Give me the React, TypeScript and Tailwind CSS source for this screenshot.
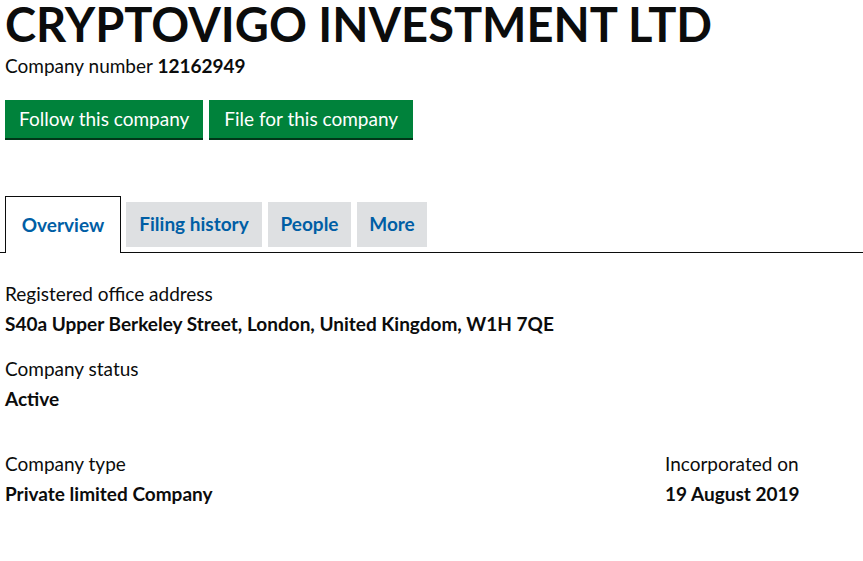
export default function App() {
  const font = { fontFamily: 'Lato, "Open Sans", sans-serif' };
  return (
    <main className="min-h-screen bg-white text-[#0b0c0c]" style={font}>
      <div className="px-[5px]">
        <h1 className="text-[47px] leading-[49px] font-bold">CRYPTOVIGO INVESTMENT LTD</h1>
        <p className="text-[19px] leading-[24px] mt-[5px]">
          Company number <strong className="font-bold">12162949</strong>
        </p>
        <div className="flex gap-[6px] mt-[22px]">
          <button className="bg-[#00823b] text-white text-[19px] h-[38px] px-[14px] shadow-[0_2px_0_#003618]">
            Follow this company
          </button>
          <button className="bg-[#00823b] text-white text-[19px] h-[38px] px-[15px] shadow-[0_2px_0_#003618]">
            File for this company
          </button>
        </div>
      </div>

      <div className="mt-[58px] flex items-end border-b border-[#0b0c0c] pl-[5px]">
        <div className="border border-b-0 border-[#0b0c0c] bg-white h-[57px] -mb-px w-[116px] flex items-center justify-center text-[19px] font-bold text-[#005ea5]">
          Overview
        </div>
        <div className="ml-[5px] mb-[5px] bg-[#dee0e2] h-[45px] w-[136px] flex items-center justify-center text-[19px] font-bold text-[#005ea5]">
          Filing history
        </div>
        <div className="ml-[6px] mb-[5px] bg-[#dee0e2] h-[45px] w-[83px] flex items-center justify-center text-[19px] font-bold text-[#005ea5]">
          People
        </div>
        <div className="ml-[6px] mb-[5px] bg-[#dee0e2] h-[45px] w-[70px] flex items-center justify-center text-[19px] font-bold text-[#005ea5]">
          More
        </div>
      </div>

      <div className="px-[5px] pt-[28px] text-[19px] leading-[25px]">
        <dl>
          <dt>Registered office address</dt>
          <dd className="font-bold mt-[5px]">S40a Upper Berkeley Street, London, United Kingdom, W1H 7QE</dd>
          <dt className="mt-[20px]">Company status</dt>
          <dd className="font-bold mt-[5px]">Active</dd>
        </dl>
        <div className="flex mt-[40px]">
          <dl className="w-[660px]">
            <dt>Company type</dt>
            <dd className="font-bold mt-[5px]">Private limited Company</dd>
          </dl>
          <dl>
            <dt>Incorporated on</dt>
            <dd className="font-bold mt-[5px]">19 August 2019</dd>
          </dl>
        </div>
      </div>
    </main>
  );
}
